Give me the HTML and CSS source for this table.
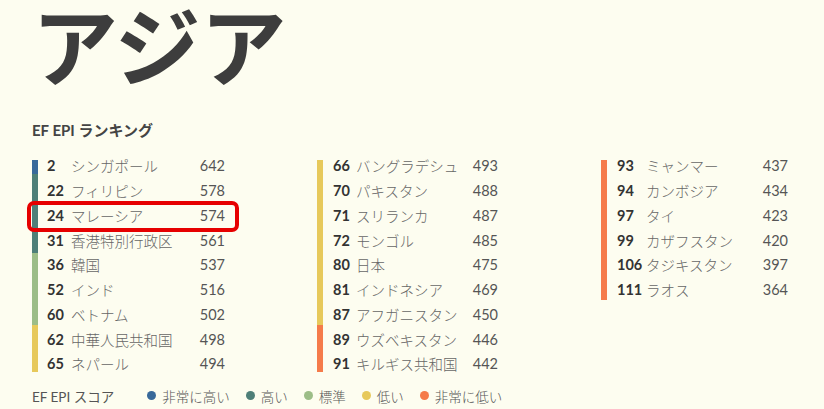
FILE: index.html
```html
<!DOCTYPE html>
<html>
  <head>
    <meta charset="UTF-8" />
    <link rel="stylesheet" href="styles.css">
  </head>
  <body>
    <div class="page">
      <h1 class="region-title">アジア</h1>
      <h2 class="ranking-title">EF EPI ランキング</h2>
      <div class="ranking">
        <div class="ranking-col col-a">
          <div class="bar">
            <span class="seg very-high" style="height: 14px"></span>
            <span class="seg high" style="height: 79px"></span>
            <span class="seg moderate" style="height: 72px"></span>
            <span class="seg low" style="height: 47px"></span>
          </div>
          <ol class="rows">
            <li><b class="rank">2</b><span class="name">シンガポール</span><span class="score">642</span></li>
            <li><b class="rank">22</b><span class="name">フィリピン</span><span class="score">578</span></li>
            <li class="highlight"><b class="rank">24</b><span class="name">マレーシア</span><span class="score">574</span></li>
            <li><b class="rank">31</b><span class="name">香港特別行政区</span><span class="score">561</span></li>
            <li><b class="rank">36</b><span class="name">韓国</span><span class="score">537</span></li>
            <li><b class="rank">52</b><span class="name">インド</span><span class="score">516</span></li>
            <li><b class="rank">60</b><span class="name">ベトナム</span><span class="score">502</span></li>
            <li><b class="rank">62</b><span class="name">中華人民共和国</span><span class="score">498</span></li>
            <li><b class="rank">65</b><span class="name">ネパール</span><span class="score">494</span></li>
          </ol>
        </div>
        <div class="ranking-col col-b">
          <div class="bar">
            <span class="seg low" style="height: 165px"></span>
            <span class="seg very-low" style="height: 47px"></span>
          </div>
          <ol class="rows">
            <li><b class="rank">66</b><span class="name">バングラデシュ</span><span class="score">493</span></li>
            <li><b class="rank">70</b><span class="name">パキスタン</span><span class="score">488</span></li>
            <li><b class="rank">71</b><span class="name">スリランカ</span><span class="score">487</span></li>
            <li><b class="rank">72</b><span class="name">モンゴル</span><span class="score">485</span></li>
            <li><b class="rank">80</b><span class="name">日本</span><span class="score">475</span></li>
            <li><b class="rank">81</b><span class="name">インドネシア</span><span class="score">469</span></li>
            <li><b class="rank">87</b><span class="name">アフガニスタン</span><span class="score">450</span></li>
            <li><b class="rank">89</b><span class="name">ウズベキスタン</span><span class="score">446</span></li>
            <li><b class="rank">91</b><span class="name">キルギス共和国</span><span class="score">442</span></li>
          </ol>
        </div>
        <div class="ranking-col col-c">
          <div class="bar">
            <span class="seg very-low" style="height: 140px"></span>
          </div>
          <ol class="rows">
            <li><b class="rank">93</b><span class="name">ミャンマー</span><span class="score">437</span></li>
            <li><b class="rank">94</b><span class="name">カンボジア</span><span class="score">434</span></li>
            <li><b class="rank">97</b><span class="name">タイ</span><span class="score">423</span></li>
            <li><b class="rank">99</b><span class="name">カザフスタン</span><span class="score">420</span></li>
            <li><b class="rank">106</b><span class="name">タジキスタン</span><span class="score">397</span></li>
            <li><b class="rank">111</b><span class="name">ラオス</span><span class="score">364</span></li>
          </ol>
        </div>
      </div>
      <div class="legend">
        <span class="legend-label">EF EPI スコア</span>
        <span class="legend-item"><i class="dot very-high"></i>非常に高い</span>
        <span class="legend-item"><i class="dot high"></i>高い</span>
        <span class="legend-item"><i class="dot moderate"></i>標準</span>
        <span class="legend-item"><i class="dot low"></i>低い</span>
        <span class="legend-item"><i class="dot very-low"></i>非常に低い</span>
      </div>
    </div>
  </body>
</html>
```

FILE: styles.css
```css
body {
    margin: 0;
    background: #fdfdf0;
    color: #333;
    font-family: Lato, "Noto Sans CJK JP", sans-serif;
}
.page {
    padding-left: 32px;
}
.region-title {
    margin: 0;
    font: 700 86px/86px "Noto Sans CJK JP", sans-serif;
    color: #3d3d3d;
}
.ranking-title {
    margin: 34px 0 0;
    font-size: 15px;
    line-height: 20px;
    font-weight: 700;
    color: #444;
}
.ranking {
    display: grid;
    grid-template-columns: 285px 284px 1fr;
    margin-top: 13.6px;
}
.ranking-col {
    display: flex;
    align-items: flex-start;
}
.col-a { --gap: 9px; --num: 24px; --name: 124px; }
.col-b { --gap: 10px; --num: 23px; --name: 112px; }
.col-c { --gap: 10px; --num: 29px; --name: 112px; }

.bar {
    display: flex;
    flex-direction: column;
    width: 6px;
    margin-top: 6.4px;
}
.seg { display: block; }
.very-high { background: #38699a; }
.high { background: #4e7f78; }
.moderate { background: #9cbd87; }
.low { background: #e7c95b; }
.very-low { background: #f57b4a; }

.rows {
    list-style: none;
    margin: 0;
    padding: 0 0 0 var(--gap);
}
.rows li {
    display: grid;
    grid-template-columns: var(--num) var(--name) 30px;
    align-items: center;
    height: 24.75px;
    font-size: 14.5px;
}
.rank {
    font-weight: 700;
    color: #333;
}
.name {
    font-family: "Noto Sans CJK JP", sans-serif;
    font-weight: 300;
    color: #666;
}
.score {
    text-align: right;
    color: #555;
}
.rows li.highlight { position: relative; }
.rows li.highlight::after {
    content: "";
    position: absolute;
    left: -20px;
    right: -14px;
    top: -2.6px;
    bottom: -4.6px;
    border: 4px solid #e60000;
    border-radius: 7px;
}

.legend {
    display: flex;
    align-items: center;
    margin-top: 9.6px;
    height: 20px;
    font-size: 13.5px;
    color: #555;
}
.legend-label {
    margin-right: 33px;
}
.legend-item {
    display: flex;
    align-items: center;
    margin-right: 16px;
    font-family: "Noto Sans CJK JP", sans-serif;
    font-weight: 300;
}
.dot {
    width: 9px;
    height: 9px;
    border-radius: 50%;
    margin-right: 6px;
}
```
